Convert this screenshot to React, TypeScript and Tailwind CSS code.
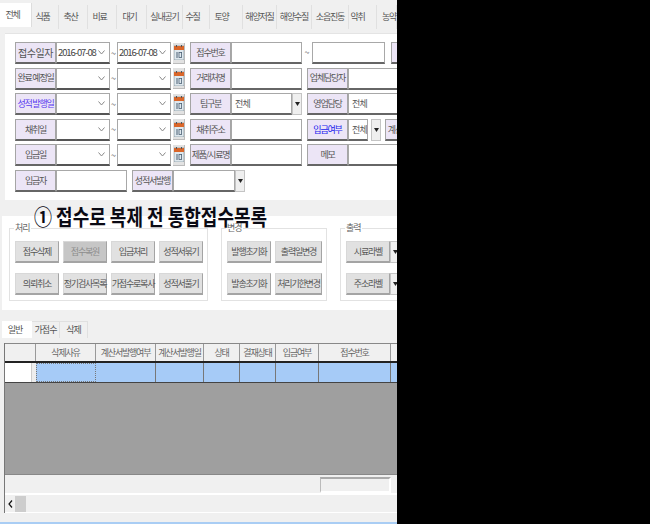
import React from 'react';

const font = { fontFamily: '"Noto Sans CJK KR", "Liberation Sans", sans-serif' };

const topTabs = [
  ['전체', 'w-[32px] pr-[6px]'],
  ['식품', 'w-[27px] pr-[5px]'],
  ['축산', 'w-[29px] pr-[5px]'],
  ['비료', 'w-[29px] pr-[5px]'],
  ['대기', 'w-[30px] pr-[4px]'],
  ['실내공기', 'w-[36px]'],
  ['수질', 'w-[27px] pr-[7px]'],
  ['토양', 'w-[33px] pr-[9px]'],
  ['해양저질', 'w-[34px]'],
  ['해양수질', 'w-[35px]'],
  ['소음진동', 'w-[37px]'],
  ['악취', 'w-[28px] pr-[10px]'],
  ['농약', 'w-[20px] pl-[5px] justify-start'],
];

const columns = [
  ['', 'w-[31px]'],
  ['삭제사유', 'w-[60px]'],
  ['계산서발행여부', 'w-[60px]'],
  ['계산서발행일', 'w-[48px]'],
  ['상태', 'w-[36px]'],
  ['결재상태', 'w-[36px]'],
  ['입금여부', 'w-[43px]'],
  ['접수번호', 'w-[72px]'],
  ['', 'w-[10px]'],
];

function Label({ text, color = 'text-[#555]', wide }: { text: string; color?: string; wide?: boolean }) {
  return (
    <div className={`w-[41px] h-[22px] shrink-0 flex items-center justify-center whitespace-nowrap bg-[#ece5f6] border border-[#a5a5a5] border-b-2 border-b-[#666] ${wide ? 'text-[10px] tracking-[-0.5px]' : 'text-[9px] tracking-[-1.2px]'} ${color}`}>
      {text}
    </div>
  );
}

function Input({ w, children }: { w: string; children?: React.ReactNode }) {
  return (
    <div className={`${w} h-[22px] shrink-0 flex items-center pl-[3px] bg-white border border-[#a8a8a8] border-b-2 border-b-[#666] text-[9px] tracking-[-0.8px] text-[#555] whitespace-nowrap overflow-hidden`}>
      {children}
    </div>
  );
}

function DateSelect({ value }: { value?: string }) {
  return (
    <div className="w-[54px] h-[22px] shrink-0 flex items-center justify-between pl-[1px] pr-[4px] bg-white border border-[#a8a8a8] border-b-2 border-b-[#555] text-[9.5px] tracking-[-1.1px] text-[#444]">
      <span className="whitespace-nowrap">{value}</span>
      <svg width="7" height="5" viewBox="0 0 7 5" className="shrink-0">
        <path d="M0.5 0.5 L3.5 4 L6.5 0.5" fill="none" stroke="#888" strokeWidth="1" />
      </svg>
    </div>
  );
}

function ArrowBox({ w = 'w-[10px]' }: { w?: string }) {
  return (
    <div className={`${w} h-[22px] shrink-0 flex items-center justify-center bg-[#efefef] border border-[#c4c4c4]`}>
      <svg width="5" height="4" viewBox="0 0 5 4">
        <path d="M0 0 H5 L2.5 4 Z" fill="#222" />
      </svg>
    </div>
  );
}

function CalendarIcon() {
  return (
    <div className="w-[12px] h-[21px] ml-[2px] shrink-0 flex items-center justify-center bg-[#e2e2e2] border-b border-r border-[#bbb]">
      <svg width="10" height="15" viewBox="0 0 10 15">
        <rect x="0" y="1" width="10" height="14" fill="#dfe8ee" stroke="#6d7f8a" strokeWidth="0.6" />
        <rect x="0" y="1" width="10" height="4" fill="#d9662a" />
        <rect x="2" y="0" width="1" height="2" fill="#555" />
        <rect x="7" y="0" width="1" height="2" fill="#555" />
        <rect x="2.5" y="7" width="1" height="6" fill="#4a5f73" />
        <rect x="5" y="7.5" width="2.6" height="5" fill="none" stroke="#4a5f73" strokeWidth="0.8" />
      </svg>
    </div>
  );
}

function DateRange({ from, to, label, color, wide }: { from?: string; to?: string; label: string; color?: string; wide?: boolean }) {
  return (
    <div className="flex items-center">
      <Label text={label} color={color} wide={wide} />
      <DateSelect value={from} />
      <span className="w-[7px] text-center text-[9px] text-[#555] leading-none">~</span>
      <DateSelect value={to} />
      <CalendarIcon />
    </div>
  );
}

function ActionButton({ text, w = 'w-[44px]', disabled }: { text: string; w?: string; disabled?: boolean }) {
  return (
    <div className={`${w} h-[22px] shrink-0 flex items-center justify-center whitespace-nowrap border-b-2 border-r border-b-[#a4a4a4] border-r-[#a4a4a4] border-t border-l border-t-[#d8d8d8] border-l-[#d8d8d8] text-[9px] tracking-[-1.2px] ${disabled ? 'bg-[#c6c6c6] text-[#8d8d8d]' : 'bg-[#e1e1e1] text-[#555]'}`}>
      {text}
    </div>
  );
}

function Group({ title, w, children }: { title: string; w: string; children: React.ReactNode }) {
  return (
    <div className={`${w} h-[73px] relative shrink-0 border border-[#e2e2e2] pl-[5px] pt-[12px]`}>
      <span className="absolute left-[4px] top-[-8px] bg-white px-[1px] text-[9px] tracking-[-1px] text-[#666] leading-[14px]">{title}</span>
      {children}
    </div>
  );
}

export default function App() {
  return (
    <div className="w-[650px] h-[524px] flex bg-black overflow-hidden" style={font}>
      <div className="w-[397px] h-full shrink-0 bg-[#f0f0f0] overflow-hidden relative flex flex-col">
        {/* 상단 탭 */}
        <div className="h-[33px] shrink-0 flex items-start pt-[3px]">
          {topTabs.map(([name, w], i) => (
            <div
              key={name}
              className={`${w} shrink-0 flex items-center justify-center whitespace-nowrap text-[9px] tracking-[-1.2px] text-[#555] ${
                i === 0 ? 'h-[24px] bg-white border-r border-[#ddd]' : 'h-[24px] mt-[2px] border-r border-[#e0e0e0]'
              }`}
            >
              {name}
            </div>
          ))}
        </div>

        {/* 검색 조건 */}
        <div className="h-[167px] shrink-0 ml-[5px] bg-white pl-[10px] pt-[8px] flex flex-col gap-[3.6px] border-t border-[#e4e4e4] overflow-hidden">
          <div className="flex items-center w-max">
            <DateRange label="접수일자" from="2016-07-08" to="2016-07-08" wide />
            <div className="w-[5px]" />
            <Label text="접수번호" />
            <Input w="w-[71px]" />
            <span className="w-[10px] text-center text-[9px] text-[#555]">~</span>
            <Input w="w-[73px]" />
            <div className="ml-[6px]"><Label text="" /></div>
          </div>
          <div className="flex items-center w-max">
            <DateRange label="완료 예정일" />
            <div className="w-[5px]" />
            <Label text="거래처명" />
            <Input w="w-[71px]" />
            <div className="w-[5px]" />
            <Label text="업체담당자" />
            <Input w="w-[60px]" />
          </div>
          <div className="flex items-center w-max">
            <DateRange label="성적 발행일" color="text-[#5a3df0]" />
            <div className="w-[5px]" />
            <Label text="팀구분" />
            <Input w="w-[61px]">전체</Input>
            <ArrowBox />
            <div className="w-[5px]" />
            <Label text="영업담당" />
            <Input w="w-[60px]">전체</Input>
          </div>
          <div className="flex items-center w-max">
            <DateRange label="채취일" />
            <div className="w-[5px]" />
            <Label text="채취주소" />
            <Input w="w-[71px]" />
            <div className="w-[5px]" />
            <Label text="입금여부" color="text-[#2222ee]" />
            <Input w="w-[20px]">전체</Input>
            <div className="ml-[3px]"><ArrowBox /></div>
            <div className="ml-[4px]"><Label text="계산서발행" /></div>
          </div>
          <div className="flex items-center w-max">
            <DateRange label="입금일" />
            <div className="w-[5px]" />
            <Label text="제품/시료명" />
            <Input w="w-[71px]" />
            <div className="w-[5px]" />
            <Label text="메모" />
            <Input w="w-[60px]" />
          </div>
          <div className="flex items-center w-max">
            <Label text="입금자" />
            <Input w="w-[71px]" />
            <div className="w-[5px]" />
            <Label text="성적서발행" />
            <Input w="w-[62px]" />
            <ArrowBox />
          </div>
        </div>

        {/* 처리 / 변경 / 출력 */}
        <div className="h-[94px] mt-[16px] shrink-0 ml-[2px] bg-white pl-[7px] pt-[12px] flex gap-[13px]">
          <Group title="처리" w="w-[199px]">
            <div className="flex gap-[4px]">
              <ActionButton text="접수삭제" />
              <ActionButton text="접수복원" disabled />
              <ActionButton text="입금처리" />
              <ActionButton text="성적서묶기" />
            </div>
            <div className="flex gap-[4px] mt-[10px]">
              <ActionButton text="의뢰취소" />
              <ActionButton text="정기검사목록" />
              <ActionButton text="가접수로복사" />
              <ActionButton text="성적서풀기" />
            </div>
          </Group>
          <Group title="변경" w="w-[106px]">
            <div className="flex gap-[4px]">
              <ActionButton text="발행초기화" />
              <ActionButton text="출력일변경" w="w-[47px]" />
            </div>
            <div className="flex gap-[4px] mt-[10px]">
              <ActionButton text="발송초기화" />
              <ActionButton text="처리기한변경" w="w-[47px]" />
            </div>
          </Group>
          <Group title="출력" w="w-[70px]">
            <div className="flex">
              <ActionButton text="시료라벨" />
              <ArrowBox w="w-[10px]" />
            </div>
            <div className="flex mt-[10px]">
              <ActionButton text="주소라벨" />
              <ArrowBox w="w-[10px]" />
            </div>
          </Group>
        </div>

        {/* 하단 탭 */}
        <div className="h-[17px] mt-[11px] shrink-0 ml-[2px] flex items-stretch">
          <div className="w-[30px] pr-[4px] bg-white flex items-center justify-center text-[9px] tracking-[-1px] text-[#555]">일반</div>
          <div className="w-[28px] flex items-center justify-center border-r border-t border-[#e0e0e0] text-[9px] tracking-[-1px] text-[#555]">가접수</div>
          <div className="w-[28px] flex items-center justify-center border-r border-t border-[#e0e0e0] text-[9px] tracking-[-1px] text-[#555]">삭제</div>
        </div>

        {/* 그리드 */}
        <div className="mt-[5px] ml-[4px] flex-1 flex flex-col border-l border-[#777] mb-[9px]">
          <div className="h-[20px] shrink-0 flex bg-[#f0f0f0] border-t border-[#888] border-b-2 border-b-[#222]">
            {columns.map(([name, w], i) => (
              <div key={i} className={`${w} shrink-0 flex items-center justify-center whitespace-nowrap border-r border-[#999] text-[9px] tracking-[-1.2px] text-[#666]`}>
                {name}
              </div>
            ))}
          </div>
          <div className="h-[20px] shrink-0 flex border-b border-[#444]">
            <div className="w-[26px] shrink-0 bg-white" />
            <div className="w-[5px] shrink-0 bg-[#ededed] border-l border-[#ccc]" />
            {columns.slice(1).map(([name, w], i) => (
              <div key={i} className={`${w} shrink-0 bg-[#a6cbf7] border-r border-[#777] ${i === 0 ? 'border border-dotted border-[#333]' : ''}`} />
            ))}
          </div>
          <div className="h-[92px] shrink-0 bg-[#9f9f9f] border-b border-[#888]" />
          <div className="h-[20px] shrink-0 flex justify-end pr-[6px] pt-[2px] border-b-2 border-b-white">
            <div className="w-[71px] h-[16px] border-t-2 border-l border-t-[#aaa] border-l-[#bbb] border-r-2 border-b-2 border-r-white border-b-white" />
          </div>
          <div className="h-[18px] shrink-0 flex items-center pl-[3px] border-b border-white">
            <svg width="5" height="8" viewBox="0 0 5 8">
              <path d="M4 0.5 L1 4 L4 7.5" fill="none" stroke="#111" strokeWidth="1.2" />
            </svg>
            <div className="ml-[2px] w-[11px] h-[16px] bg-[#cdcdcd]" />
          </div>
        </div>
        <div className="h-[3px] shrink-0 bg-[#a9cdf4]" />

        {/* 제목 주석 */}
        <div className="absolute left-[34px] top-[200px] origin-top-left scale-y-[1.2] text-[18px] font-bold leading-[26px] text-[#0a0a14] whitespace-nowrap">
          ① 접수로 복제 전 통합접수목록
        </div>
      </div>
      <div className="flex-1 bg-black" />
    </div>
  );
}
